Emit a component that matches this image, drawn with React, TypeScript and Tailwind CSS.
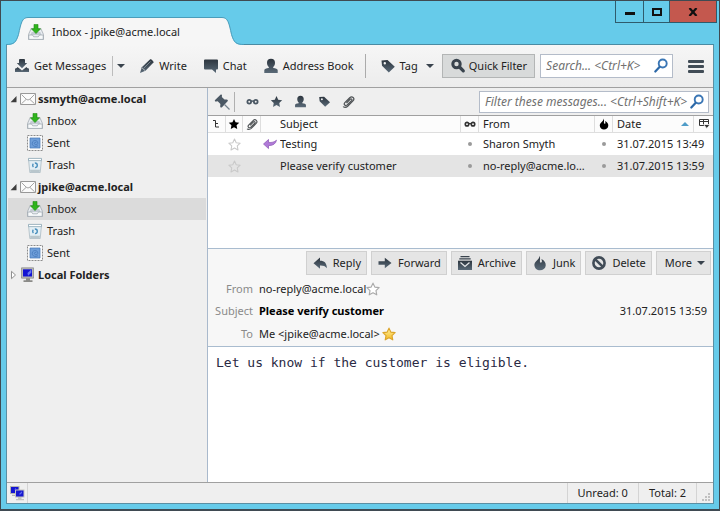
import type { ReactNode } from 'react'
import { clsx } from 'clsx'

type IconProps = { className?: string; fill?: string }

/* ---------- monochrome toolbar glyphs ---------- */

function Gradients() {
  return (
    <svg className="absolute h-0 w-0" aria-hidden="true">
      <defs>
        <linearGradient id="slate" x1="0" y1="0" x2="0" y2="1">
          <stop offset="0" stopColor="#2c353e" />
          <stop offset="1" stopColor="#5a6a78" />
        </linearGradient>
        <linearGradient id="gold" x1="0" y1="0" x2="0" y2="1">
          <stop offset="0" stopColor="#fff3a0" />
          <stop offset="1" stopColor="#f5b921" />
        </linearGradient>
      </defs>
    </svg>
  )
}

function Glyph({ className, children }: { className?: string; children: ReactNode }) {
  return (
    <svg viewBox="0 0 16 16" aria-hidden="true" className={clsx('shrink-0', className ?? 'h-4 w-4')}>
      {children}
    </svg>
  )
}

function GetMailIcon() {
  return (
    <Glyph>
      <path fill="url(#slate)" d="M6 1h4a1 1 0 0 1 1 1v3h2.200L8 10.200 2.800 5H5V2a1 1 0 0 1 1-1z" />
      <path fill="url(#slate)" d="M3.500 9 8 12.600 12.500 9c.5 1 1.200 1.400 2.500 1.600V14H1v-3.400c1.300-.2 2-.6 2.500-1.600z" />
    </Glyph>
  )
}

function PencilIcon() {
  return (
    <Glyph>
      <path fill="url(#slate)" d="M11.200 1.300c.8-.6 3.600 2 3.300 3.200L6.500 12.700 1 15l1.800-5.800z" />
      <path fill="none" stroke="#8d99a3" strokeWidth=".8" d="m5 10 6.500-6.500" />
      <path fill="none" stroke="#eeeeee" strokeWidth=".7" d="m2.800 9.600 3.300 3" />
    </Glyph>
  )
}

function ChatIcon() {
  return (
    <Glyph>
      <path fill="url(#slate)" d="M2 1.500h12a1 1 0 0 1 1 1v8a1 1 0 0 1-1 1h-1V15l-4-3.500H2a1 1 0 0 1-1-1v-8a1 1 0 0 1 1-1z" />
    </Glyph>
  )
}

function PersonIcon({ className, fill = 'url(#slate)' }: IconProps) {
  return (
    <Glyph className={className}>
      <path fill={fill} d="M8 .8c2.700 0 4 1.600 4 4 0 2-.7 3.500-1.800 4.300v.9c2.500.2 4.300.8 4.500 2.200V15H1.300v-2.800c.2-1.400 2-2 4.500-2.200v-.9C4.700 8.300 4 6.800 4 4.800c0-2.400 1.300-4 4-4z" />
    </Glyph>
  )
}

function TagIcon({ className }: IconProps) {
  return (
    <Glyph className={className}>
      <path fill="url(#slate)" fillRule="evenodd" d="M1.500 2.500 7.500 2l7.300 6.800-6 5.700L2 7.700zM4.800 4a1.200 1.200 0 1 0 0 2.400 1.200 1.200 0 0 0 0-2.400z" />
    </Glyph>
  )
}

function FilterIcon() {
  return (
    <Glyph>
      <circle cx="6.500" cy="6" r="3.700" fill="none" stroke="#39434d" strokeWidth="3" />
      <path fill="none" stroke="#39434d" strokeWidth="3.200" strokeLinecap="round" d="m10 9.500 3.300 3.300" />
    </Glyph>
  )
}

function SearchIcon() {
  return (
    <Glyph>
      <circle cx="9.700" cy="5.500" r="4" fill="#fff" stroke="#3a76b5" strokeWidth="1.900" />
      <path fill="none" stroke="#2d69a8" strokeWidth="2.200" strokeLinecap="round" d="M6.500 9 2.300 13.500" />
    </Glyph>
  )
}

function PinIcon() {
  return (
    <Glyph>
      <path fill="#4b5864" d="M6.500.8c.6-.6 1.600.1 1.500 1l-.2 1.300 2.700 2.500 1.900-.2c1.200-.1 1.900 1 1.200 1.800L8 13.200c-.8.7-1.900.1-1.800-1l.2-2.300-2.700-2.700-1.600.4C1 7.800.4 6.700 1.100 6z" />
      <path fill="none" stroke="#75828d" strokeWidth="1.200" d="m10.500 10.500 5 5" />
    </Glyph>
  )
}

function GlassesIcon({ className, fill = '#4b5864' }: IconProps) {
  return (
    <Glyph className={className}>
      <g fill="none" stroke={fill} strokeWidth="2.200">
        <circle cx="4" cy="8.200" r="2.300" />
        <circle cx="12" cy="8.200" r="2.300" />
        <path strokeWidth="1.800" d="M6 7.500h4" />
      </g>
    </Glyph>
  )
}

function StarIcon({ className, fill = 'url(#slate)', stroke = 'none' }: IconProps & { stroke?: string }) {
  return (
    <Glyph className={className}>
      <path
        fill={fill}
        stroke={stroke}
        strokeWidth="1.300"
        strokeLinejoin="round"
        d="m8 1.300 2.100 4.500 4.900.6-3.600 3.400.9 4.900L8 12.300l-4.300 2.400.9-4.900L1 6.400l4.900-.6z"
      />
    </Glyph>
  )
}

function ClipIcon({ className }: IconProps) {
  return (
    <Glyph className={className}>
      <path
        fill="none"
        stroke="#4f5356"
        strokeWidth="1.500"
        d="M5.500 9.800 10 5.300c1.500-1.300 3 .2 1.700 1.600l-5.300 5.300c-2.200 2-4.900-.6-2.900-2.800l6-6c3-2.900 6.900.8 4 3.900l-6.500 6.600c-2 1.900-5 1.500-5.500.4"
      />
    </Glyph>
  )
}

function FlameIcon({ className, fill = 'url(#slate)' }: IconProps) {
  return (
    <Glyph className={className}>
      <path fill={fill} d="M7.800.7C8.500 4 7.600 5.500 8 7c.4 1 1.800.8 1.900-.5.1-1-.3-1.700-.5-2.500 3.200 1.500 4.700 4 4.300 6.800-.4 2.800-2.700 4.500-5.700 4.500s-5.400-2-5.600-5C2.200 6.200 6.800 5.500 7.800.7z" />
    </Glyph>
  )
}

function ReplyIcon() {
  return (
    <Glyph>
      <path fill="url(#slate)" d="M1.500 8.200 8 2.500v3.300c4.500 0 6.800 2.500 6.900 7.400C13.200 10.800 11 10.300 8 10.400v3.400z" />
    </Glyph>
  )
}

function ForwardIcon() {
  return (
    <Glyph>
      <path fill="url(#slate)" d="M1.500 6.200h6.300V2.700L14.500 8l-6.700 5.300V9.800H1.500z" />
    </Glyph>
  )
}

function ArchiveIcon() {
  return (
    <Glyph>
      <path fill="#39434d" d="M3.500 1h9v1.200h-9zM2.300 3.300h11.400v1.200H2.300z" />
      <path fill="url(#slate)" d="M1 5.700h14V15H1z" />
      <path fill="none" stroke="#e3e5e7" strokeWidth="1.300" d="m3.500 7.500 4.500 4 4.500-4" />
    </Glyph>
  )
}

function DeleteIcon() {
  return (
    <Glyph>
      <g fill="none" stroke="#414c57" strokeWidth="2.600">
        <circle cx="8" cy="8" r="5.600" />
        <path d="m4.300 4.300 7.400 7.400" />
      </g>
    </Glyph>
  )
}

function RepliedIcon() {
  return (
    <Glyph>
      <path fill="#b07ad8" stroke="#8a52b3" strokeWidth=".7" d="M1.500 8 6.500 3.500v2.900c3.200.4 6-.3 8-2.200-.8 3.700-3.600 5.500-8 5.400v3z" />
    </Glyph>
  )
}

function Caret() {
  return (
    <svg viewBox="0 0 8 4" aria-hidden="true" className="h-1 w-2 shrink-0">
      <path fill="#39434d" d="M0 0h8L4 4z" />
    </svg>
  )
}

/* ---------- folder icons ---------- */

function InboxIcon() {
  return (
    <Glyph>
      <path fill="#e9edf1" stroke="#a3abb3" strokeWidth=".8" d="M3.200 4.500h9.600l2.700 6v5H.5v-5z" />
      <path fill="#c3cbd3" d="M3.700 8h8.600l1.200 3h-11z" />
      <path fill="#f8fafb" stroke="#98a2ab" strokeWidth=".7" d="M.8 11h3.700l1.200 1.800h4.600L11.500 11h3.700v4.400H.8z" />
      <path fill="#2fb41c" stroke="#1b8a0e" strokeWidth=".6" d="M6 .4h4v4.400h2.600L8 9.600 3.400 4.800H6z" />
    </Glyph>
  )
}

function SentIcon() {
  return (
    <Glyph>
      <path fill="#fafafa" stroke="#8c8c8c" strokeWidth="1" strokeDasharray="2 1" d="M.5.5h15v15H.5z" />
      <path fill="#6f9fda" stroke="#4377b5" strokeWidth=".7" d="M3 3h10v10H3z" />
      <path fill="none" stroke="#3f72b5" strokeWidth=".7" d="M11 10.500c-2 2-6 .8-5.800-2.300.2-3.700 6-3.500 5.600.2-.3 2-3.600 1.700-3.400-.2.2-1.200 1.700-1.200 1.800 0" />
    </Glyph>
  )
}

function TrashIcon() {
  return (
    <Glyph>
      <path fill="#e3eff5" stroke="#a3b3bc" strokeWidth=".7" d="M1.500 2h13l-1.300 13.500H2.800z" />
      <path fill="#fff" stroke="#8ba7b5" strokeWidth=".8" d="M1.500 1.400h13v2.200h-13z" />
      <path fill="#b9c6cc" d="M3 12.800h10l-.3 2.300H3.300z" />
      <circle cx="8" cy="8.300" r="2.300" fill="none" stroke="#4a90bd" strokeWidth="1.400" strokeDasharray="3.300 1.500" />
    </Glyph>
  )
}

function MailIcon() {
  return (
    <svg viewBox="0 0 16 12" aria-hidden="true" className="h-3 w-4 shrink-0">
      <path fill="#fbfbfb" stroke="#999" d="M.5.5h15v11H.5z" />
      <path fill="none" stroke="#9a9a9a" strokeWidth=".9" d="M1.500 1.500 6 6c1.300 1.200 2.700 1.200 4 0l4.500-4.500M1.500 10.700 6 6.500m8.500 4.200L10 6.500" />
    </svg>
  )
}

function ComputerIcon() {
  return (
    <Glyph>
      <path fill="#b9b9b5" stroke="#777" strokeWidth=".6" d="M1.500.8h12v10.400h-12z" />
      <path fill="#1414d2" d="M3 2.300h9v7.200H3z" />
      <path fill="#6a78f0" d="m7.500 6 3.800-3.400v3.200L8 8.700z" />
      <path fill="#8b8b88" d="M6 11.200h4v2h2.500V15h-9v-1.800H6z" />
    </Glyph>
  )
}

function OnlineIcon() {
  return (
    <Glyph>
      <path fill="#b5b5b0" d="M1 1h9.500v8H1zM3 9.800h4V11H3z" />
      <path fill="#1414d2" d="M2 2h7.500v6H2z" />
      <path fill="#c4c4bf" d="M6 4.500h9.500v8H6zM9 12.500h3.500V14H15v1.200H7V14h2z" />
      <path fill="#1717cf" d="M7 5.500h7.500v6H7z" />
      <path fill="#5f6df0" d="m10 9 3-2.700v1.800l-2 1.700zM4.500 5 7 3v1.500H5z" />
    </Glyph>
  )
}

function Twisty({ open }: { open: boolean }) {
  return (
    <svg viewBox="0 0 8 10" aria-hidden="true" className="h-[10px] w-2 shrink-0">
      {open ? (
        <path fill="#3c3c3c" d="M6.500 2v6.300H.6z" />
      ) : (
        <path fill="#fff" stroke="#909090" d="M1.500 1.300 5.500 5l-4 3.700z" />
      )}
    </svg>
  )
}

/* ---------- window frame ---------- */

function TitleBar() {
  return (
    <header className="flex h-11 items-end">
      <div className="flex h-7 w-[238px] shrink-0" role="tablist">
        <svg viewBox="0 0 22 28" className="h-7 w-[22px] shrink-0" aria-hidden="true">
          <path fill="#f6f6f6" d="M0 28c8 0 10-2 12.500-10C15 6 16 .5 22 .5V28z" />
          <path fill="none" stroke="#4a9dbb" d="M0 27.500c8 0 10-2 12.500-10C15 6 16 .5 22 .5" />
        </svg>
        <button role="tab" aria-selected="true" className="flex flex-1 items-center gap-2 border-t border-[#4a9dbb] bg-[#f6f6f6] text-left">
          <InboxIcon />
          Inbox - jpike@acme.local
        </button>
        <svg viewBox="0 0 22 28" className="h-7 w-[22px] shrink-0" aria-hidden="true">
          <path fill="#f6f6f6" d="M22 28c-8 0-10-2-12.500-10C7 6 6 .5 0 .5V28z" />
          <path fill="none" stroke="#4a9dbb" d="M22 27.500c-8 0-10-2-12.500-10C7 6 6 .5 0 .5" />
        </svg>
      </div>
      <div className="flex flex-1 justify-end self-stretch border-b border-[#4a8ba3]">
        <div className="-mr-[3px] flex h-[22px] border border-t-0 border-[#2f5b6c]">
          <button aria-label="Minimize" className="flex w-7 items-center justify-center border-r border-[#2f5b6c]">
            <span className="mt-1 h-[3px] w-[10px] bg-[#111]" />
          </button>
          <button aria-label="Maximize" className="flex w-[26px] items-center justify-center border-r border-[#2f5b6c]">
            <span className="h-2 w-[10px] border-2 border-[#111]" />
          </button>
          <button aria-label="Close" className="flex w-[46px] items-center justify-center bg-[#c4584e]">
            <svg viewBox="0 0 10 8" className="h-2 w-[10px]" aria-hidden="true">
              <path fill="none" stroke="#111" strokeWidth="2.200" d="m1.500 0 7 8m0-8-7 8" />
            </svg>
          </button>
        </div>
      </div>
    </header>
  )
}

function ToolButton({ icon, children }: { icon: ReactNode; children: ReactNode }) {
  return (
    <button className="flex items-center gap-1 whitespace-nowrap">
      {icon}
      {children}
    </button>
  )
}

function SearchBox({ label, className }: { label: string; className: string }) {
  return (
    <label className={clsx('flex items-center border border-[#b4bcc9] bg-white pr-[3px]', className)}>
      <input
        type="text"
        aria-label={label}
        placeholder={label}
        className="min-w-0 flex-1 pl-[5px] text-xs italic outline-none placeholder:text-[#707070]"
      />
      <SearchIcon />
    </label>
  )
}

function MailToolbar() {
  return (
    <div className="flex h-[43px] items-center border-b border-[#a0a0a0] bg-linear-to-b from-[#f6f6f6] to-[#ececec] pl-[7px] pr-[10px]">
      <ToolButton icon={<GetMailIcon />}>Get Messages</ToolButton>
      <button aria-label="Get messages options" className="ml-[6px] flex h-5 items-center border-l border-[#bcbcbc] pl-1">
        <Caret />
      </button>
      <div className="ml-[14px] flex gap-4">
        <ToolButton icon={<PencilIcon />}>Write</ToolButton>
        <ToolButton icon={<ChatIcon />}>Chat</ToolButton>
        <ToolButton icon={<PersonIcon />}>Address Book</ToolButton>
      </div>
      <div className="ml-[11px] flex h-6 items-center gap-2 border-l border-[#ababab] pl-[14px] pr-2">
        <ToolButton icon={<TagIcon />}>Tag</ToolButton>
        <Caret />
      </div>
      <div className="ml-auto flex items-center">
        <button aria-pressed="true" className="flex h-6 items-center gap-[3px] whitespace-nowrap border border-[#b3b5b5] bg-[#d8dada] px-[7px]">
          <FilterIcon />
          Quick Filter
        </button>
        <SearchBox label="Search... <Ctrl+K>" className="ml-[5px] h-6 w-[133px]" />
        <button aria-label="Application menu" className="ml-[15px] flex w-4 flex-col gap-[2px]">
          <span className="h-[3px] rounded-[1px] bg-[#414c56]" />
          <span className="h-[3px] rounded-[1px] bg-[#414c56]" />
          <span className="h-[3px] rounded-[1px] bg-[#414c56]" />
        </button>
      </div>
    </div>
  )
}

/* ---------- folder pane ---------- */

const accounts = [
  { name: 'ssmyth@acme.local', folders: ['Inbox', 'Sent', 'Trash'], selected: '' },
  { name: 'jpike@acme.local', folders: ['Inbox', 'Trash', 'Sent'], selected: 'Inbox' },
]

const folderIcons: Record<string, ReactNode> = {
  Inbox: <InboxIcon />,
  Sent: <SentIcon />,
  Trash: <TrashIcon />,
}

function FolderPane() {
  return (
    <nav aria-label="Folders" className="w-[201px] shrink-0 border-r border-[#a9b9cc] bg-[#efefef] px-px">
      {accounts.map(account => (
        <section key={account.name}>
          <button className="flex h-[22px] w-full items-center gap-[2px] pl-[2px] text-left font-bold">
            <Twisty open />
            <MailIcon />
            {account.name}
          </button>
          <ul>
            {account.folders.map(folder => (
              <li key={folder}>
                <button
                  className={clsx(
                    'flex h-[22px] w-full items-center gap-1 pl-[19px] text-left',
                    folder === account.selected && 'bg-[#dbdbdb]',
                  )}
                >
                  {folderIcons[folder]}
                  {folder}
                </button>
              </li>
            ))}
          </ul>
        </section>
      ))}
      <button className="flex h-[22px] w-full items-center gap-[2px] pl-[2px] text-left font-bold">
        <Twisty open={false} />
        <ComputerIcon />
        Local Folders
      </button>
    </nav>
  )
}

/* ---------- message list ---------- */

const messages = [
  { subject: 'Testing', from: 'Sharon Smyth', date: '31.07.2015 13:49', replied: true, selected: false },
  { subject: 'Please verify customer', from: 'no-reply@acme.local', date: '31.07.2015 13:59', replied: false, selected: true },
]

function QuickFilterBar() {
  return (
    <div className="flex h-7 items-center border-b border-[#a0a0a0] bg-[#efefef] pl-[6px] pr-1">
      <button aria-label="Keep filters applied" className="flex h-5 items-center border-r border-[#b0b0b0] pr-1">
        <PinIcon />
      </button>
      <div className="flex items-center gap-[11px] pl-[11px]">
        <button aria-label="Unread"><GlassesIcon className="h-[13px] w-[13px]" /></button>
        <button aria-label="Starred"><StarIcon className="h-[13px] w-[13px]" /></button>
        <button aria-label="Contact"><PersonIcon className="h-[13px] w-[13px]" /></button>
        <button aria-label="Tags"><TagIcon className="h-[13px] w-[13px]" /></button>
        <button aria-label="Attachment"><ClipIcon className="h-[13px] w-[13px]" /></button>
      </div>
      <SearchBox label="Filter these messages... <Ctrl+Shift+K>" className="ml-auto h-[22px] w-[230px]" />
    </div>
  )
}

function HeadCell({ children, label }: { children: ReactNode; label?: string }) {
  return (
    <th aria-label={label} className="border-b border-r border-[#dedede] p-0 text-left font-normal">
      {children}
    </th>
  )
}

function Dot() {
  return <span className="mx-auto block h-1 w-1 rounded-full bg-[#9a9a9a]" />
}

function ThreadPane() {
  return (
    <div className="h-[132px] shrink-0 overflow-hidden bg-white">
      <table className="w-full table-fixed border-separate border-spacing-0">
        <colgroup>
          <col className="w-[18px]" />
          <col className="w-[17px]" />
          <col className="w-[18px]" />
          <col />
          <col className="w-[18px]" />
          <col className="w-[116px]" />
          <col className="w-[18px]" />
          <col className="w-[81px]" />
          <col className="w-[19px]" />
        </colgroup>
        <thead>
          <tr className="h-[17px] bg-[#fcfcfc] leading-4">
            <HeadCell label="Thread">
              <svg viewBox="0 0 8 10" className="mx-auto h-[10px] w-2" aria-hidden="true">
                <path fill="none" stroke="#333" d="M0 1.500h2.500v6.500H6M2.500 4.500H5" />
              </svg>
            </HeadCell>
            <HeadCell label="Starred"><StarIcon className="mx-auto h-3 w-3" fill="#000" /></HeadCell>
            <HeadCell label="Attachments"><ClipIcon className="mx-auto h-3 w-3" /></HeadCell>
            <HeadCell><span className="pl-[19px]">Subject</span></HeadCell>
            <HeadCell label="Read"><GlassesIcon className="mx-auto h-3 w-3" fill="#333" /></HeadCell>
            <HeadCell><span className="pl-1">From</span></HeadCell>
            <HeadCell label="Junk status"><FlameIcon className="mx-auto h-3 w-3" fill="#000" /></HeadCell>
            <HeadCell>
              <span className="flex items-center justify-between pl-1 pr-1">
                Date
                <svg viewBox="0 0 8 4" className="h-1 w-2" aria-hidden="true">
                  <path fill="#4f9cc8" d="M0 4h8L4 0z" />
                </svg>
              </span>
            </HeadCell>
            <th className="border-b border-[#dedede] p-0">
              <button aria-label="Select columns to display" className="mx-auto block">
                <svg viewBox="0 0 12 10" className="h-[10px] w-3" aria-hidden="true">
                  <path fill="none" stroke="#333" d="M1.500.5h9v6h-9zM1.500 2.500h9M5.500.5v6" />
                  <path fill="#333" stroke="#fcfcfc" strokeWidth=".8" d="M5.500 5.500H12L8.800 9.500z" />
                </svg>
              </button>
            </th>
          </tr>
        </thead>
        <tbody>
          {messages.map(m => (
            <tr key={m.date} className={clsx('h-[22px]', m.selected && 'bg-[#e4e4e4]')}>
              <td className="p-0" />
              <td className="p-0"><StarIcon className="mx-auto h-[13px] w-[13px]" fill="none" stroke="#c9c9c9" /></td>
              <td className="p-0" />
              <td className="p-0">
                <span className="flex items-center">
                  <span className="flex w-[19px] shrink-0 pl-px">{m.replied && <RepliedIcon />}</span>
                  <span className="truncate">{m.subject}</span>
                </span>
              </td>
              <td className="p-0"><Dot /></td>
              <td className="truncate py-0 pl-1 pr-[6px]">{m.from}</td>
              <td className="p-0"><Dot /></td>
              <td colSpan={2} className="whitespace-nowrap py-0 pl-1 pr-0">{m.date}</td>
            </tr>
          ))}
        </tbody>
      </table>
    </div>
  )
}

/* ---------- message ---------- */

function ActionButton({ icon, children }: { icon?: ReactNode; children: ReactNode }) {
  return (
    <button className="flex h-6 items-center gap-[5px] border border-[#d0d0d0] bg-[#e5e5e5] px-[5px]">
      {icon}
      {children}
    </button>
  )
}

function MessageHeader() {
  return (
    <div className="border-y border-[#a9bccf] bg-[#f7f7f7] pl-[6px] pr-[2px] pt-[2px]">
      <div className="flex justify-end gap-1">
        <ActionButton icon={<ReplyIcon />}>Reply</ActionButton>
        <ActionButton icon={<ForwardIcon />}>Forward</ActionButton>
        <ActionButton icon={<ArchiveIcon />}>Archive</ActionButton>
        <ActionButton icon={<FlameIcon />}>Junk</ActionButton>
        <ActionButton icon={<DeleteIcon />}>Delete</ActionButton>
        <ActionButton><span className="pl-[3px]">More</span><Caret /></ActionButton>
      </div>
      <dl className="mt-[3px] grid grid-cols-[39px_1fr] gap-x-[6px]">
        <dt className="py-[3px] text-right text-[#8a8a8a]">From</dt>
        <dd className="flex items-center">no-reply@acme.local<StarIcon className="h-[14px] w-[14px]" fill="#fff" stroke="#a9a9a9" /></dd>
        <dt className="py-[3px] text-right text-[#8a8a8a]">Subject</dt>
        <dd className="flex items-center justify-between pr-1">
          <strong className="text-black">Please verify customer</strong>
          <time dateTime="2015-07-31T13:59">31.07.2015 13:59</time>
        </dd>
        <dt className="py-1 text-right text-[#8a8a8a]">To</dt>
        <dd className="flex items-center gap-[2px]">Me &lt;jpike@acme.local&gt;<StarIcon className="h-[14px] w-[14px]" fill="url(#gold)" stroke="#dba42a" /></dd>
      </dl>
    </div>
  )
}

function StatusBar() {
  return (
    <footer className="flex h-[21px] items-center border-t border-[#a0a0a0] bg-[#efefef]">
      <span className="flex h-full items-center border-r border-[#d4d4d4] px-[2px]"><OnlineIcon /></span>
      <span className="ml-auto flex h-full items-center border-l border-[#d4d4d4] px-[10px]">Unread: 0</span>
      <span className="flex h-full items-center border-x border-[#d4d4d4] px-[10px]">Total: 2</span>
      <svg viewBox="0 0 10 10" className="ml-[5px] mr-px h-[10px] w-[10px] self-end" aria-hidden="true">
        <path fill="#c0c0c0" d="M6 0h2v2H6zM3 3h2v2H3zM6 3h2v2H6zM0 6h2v2H0zM3 6h2v2H3zM6 6h2v2H6z" />
      </svg>
    </footer>
  )
}

export default function App() {
  return (
    <div className="flex min-h-screen flex-col border-x border-t border-b-2 border-[#3f4a52] bg-[#66cbea] px-[5px] pb-[5px] font-['Noto_Sans','Open_Sans',sans-serif] text-[11px] leading-4 text-[#222]">
      <Gradients />
      <TitleBar />
      <div className="flex flex-1 flex-col border border-t-0 border-[#5b8fa3] bg-white">
        <MailToolbar />
        <div className="flex flex-1">
          <FolderPane />
          <main className="flex min-w-0 flex-1 flex-col">
            <QuickFilterBar />
            <ThreadPane />
            <MessageHeader />
            <article className="flex-1 bg-white p-2 font-['DejaVu_Sans_Mono',monospace] text-[13px] text-[#2a2a44]">
              Let us know if the customer is eligible.
            </article>
          </main>
        </div>
        <StatusBar />
      </div>
    </div>
  )
}
